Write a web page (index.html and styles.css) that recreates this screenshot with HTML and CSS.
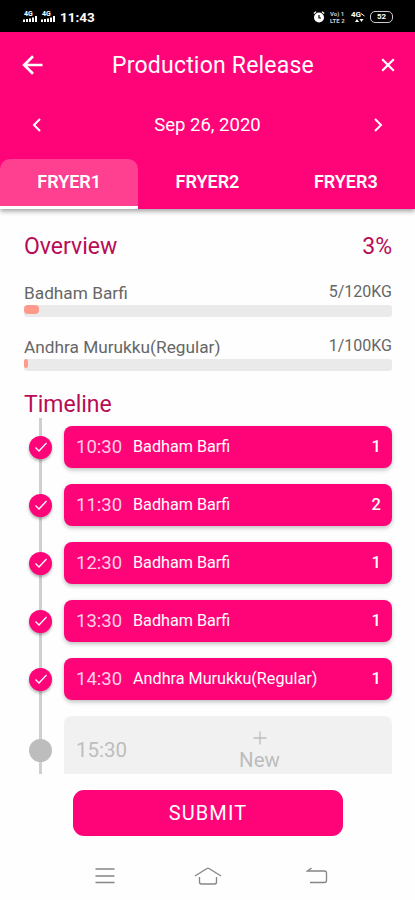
FILE: index.html
```html
<!DOCTYPE html>
<html lang="en">
<head>
    <meta charset="utf-8">
    <title>Production Release</title>
    <link rel="stylesheet" href="styles.css">
</head>
<body>
    <div class="status-bar">
        <div class="status-left">
            <svg class="signal" width="14" height="13" viewBox="0 0 14 13" fill="#fff">
                <text x="1" y="6">4G</text>
                <path d="M0 9.500h2v2.500H0zM3 9h2v3H3zM6 8.500h2v3.500H6zM9 7.500h2V12H9zM12 6h2v6h-2z"/>
            </svg>
            <svg class="signal" width="14" height="13" viewBox="0 0 14 13" fill="#fff">
                <text x="1" y="6">4G</text>
                <path d="M0 9.500h2v2.500H0zM3 9h2v3H3zM6 8.500h2v3.500H6zM9 7.500h2V12H9zM12 6h2v6h-2z"/>
            </svg>
            <span class="clock">11:43</span>
        </div>
        <div class="status-right">
            <svg width="12" height="12" viewBox="0 0 12 12">
                <circle cx="6" cy="6.500" r="5" fill="#fff"/>
                <path d="M.8 2.500L3 .8M11.200 2.500L9 .8" stroke="#fff" stroke-width="1.300"/>
                <path d="M6 4v3h2" fill="none" stroke="#000" stroke-width="1.200"/>
            </svg>
            <div class="volte">
                <span>Vo) 1</span>
                <span>LTE 2</span>
            </div>
            <svg class="tiny" width="14" height="13" viewBox="0 0 14 13" fill="#fff">
                <text x="0" y="7">4G</text>
                <path d="M4 12l2-3 2 3zM8.500 9h4l-2 3z"/>
                <path d="M10 3.500l3.500 2.500" stroke="#fff"/>
            </svg>
            <div class="battery">52</div>
        </div>
    </div>

    <div class="header">
        <div class="title-row">
            <svg class="back" width="22" height="20" viewBox="0 0 22 20" fill="none" stroke="#fff" stroke-width="2.700">
                <path d="M20.500 10H2.500M11 1.200L2.200 10l8.800 8.800"/>
            </svg>
            <h1>Production Release</h1>
            <svg class="close" width="14" height="14" viewBox="0 0 14 14" stroke="#fff" stroke-width="2.200">
                <path d="M1.200 1.200l11.600 11.600M12.800 1.200L1.200 12.800"/>
            </svg>
        </div>
        <div class="date-row">
            <svg width="10" height="14" viewBox="0 0 10 14" fill="none" stroke="#fff" stroke-width="2">
                <path d="M8 1L2 7l6 6"/>
            </svg>
            <span class="date">Sep 26, 2020</span>
            <svg width="10" height="14" viewBox="0 0 10 14" fill="none" stroke="#fff" stroke-width="2">
                <path d="M2 1l6 6-6 6"/>
            </svg>
        </div>
        <div class="tabs">
            <div class="tab active">FRYER1</div>
            <div class="tab">FRYER2</div>
            <div class="tab">FRYER3</div>
        </div>
    </div>

    <div class="content">
        <div class="section-title">
            <h2>Overview</h2>
            <span class="percent">3%</span>
        </div>
        <div class="product">
            <div class="product-row">
                <span class="product-name">Badham Barfi</span>
                <span class="amount">5/120KG</span>
            </div>
            <div class="bar"><div class="bar-fill" style="width: 4.2%"></div></div>
        </div>
        <div class="product">
            <div class="product-row">
                <span class="product-name">Andhra Murukku(Regular)</span>
                <span class="amount">1/100KG</span>
            </div>
            <div class="bar"><div class="bar-fill" style="width: 1%"></div></div>
        </div>

        <h2 class="timeline-title">Timeline</h2>
        <div class="timeline">
            <div class="slot">
                <div class="rail"><div class="dot"><svg width="14" height="12" viewBox="0 0 14 12"><path d="M1.500 6.500l3.500 3.500 7.500-8"/></svg></div></div>
                <div class="card"><span class="time">10:30</span><span class="item">Badham Barfi</span><span class="count">1</span></div>
            </div>
            <div class="slot">
                <div class="rail"><div class="dot"><svg width="14" height="12" viewBox="0 0 14 12"><path d="M1.500 6.500l3.500 3.500 7.500-8"/></svg></div></div>
                <div class="card"><span class="time">11:30</span><span class="item">Badham Barfi</span><span class="count">2</span></div>
            </div>
            <div class="slot">
                <div class="rail"><div class="dot"><svg width="14" height="12" viewBox="0 0 14 12"><path d="M1.500 6.500l3.500 3.500 7.500-8"/></svg></div></div>
                <div class="card"><span class="time">12:30</span><span class="item">Badham Barfi</span><span class="count">1</span></div>
            </div>
            <div class="slot">
                <div class="rail"><div class="dot"><svg width="14" height="12" viewBox="0 0 14 12"><path d="M1.500 6.500l3.500 3.500 7.500-8"/></svg></div></div>
                <div class="card"><span class="time">13:30</span><span class="item">Badham Barfi</span><span class="count">1</span></div>
            </div>
            <div class="slot">
                <div class="rail"><div class="dot"><svg width="14" height="12" viewBox="0 0 14 12"><path d="M1.500 6.500l3.500 3.500 7.500-8"/></svg></div></div>
                <div class="card"><span class="time">14:30</span><span class="item">Andhra Murukku(Regular)</span><span class="count">1</span></div>
            </div>
            <div class="slot empty">
                <div class="rail"><div class="dot"></div></div>
                <div class="card">
                    <span class="time">15:30</span>
                    <div class="new">
                        <svg width="14" height="14" viewBox="0 0 14 14" stroke="#bdbdbd" stroke-width="1.300"><path d="M7 .5v13M.5 7h13"/></svg>
                        <span>New</span>
                    </div>
                </div>
            </div>
        </div>
    </div>

    <button type="button" class="submit-btn">SUBMIT</button>

    <div class="nav-bar">
        <svg width="20" height="18" viewBox="0 0 20 18" stroke="#858585" stroke-width="1.300">
            <path d="M.5 2h19M.5 9h19M.5 15.500h19"/>
        </svg>
        <svg width="28" height="20" viewBox="0 0 28 20" fill="none" stroke="#858585" stroke-width="1.300">
            <path d="M1 9L13 1.500q1-.6 2 0L27 9M5.500 10v5q0 2 2 2h13q2 0 2-2v-5"/>
        </svg>
        <svg width="22" height="18" viewBox="0 0 22 18" fill="none" stroke="#858585" stroke-width="1.300">
            <path d="M5.500 1L1.500 4h17q2 0 2 2v7.500q0 2-2 2H4"/>
        </svg>
    </div>
</body>
</html>
```
FILE: styles.css
```css
* {
    box-sizing: border-box;
}
body {
    margin: 0;
    width: 415px;
    height: 900px;
    overflow: hidden;
    background: #fefefe;
    font-family: Roboto, sans-serif;
    display: flex;
    flex-direction: column;
}
h1, h2 {
    margin: 0;
    font-weight: 400;
}
svg {
    display: block;
    flex: none;
}

/* phone status bar */
.status-bar {
    height: 32px;
    flex: none;
    padding: 1px 22px 0 23px;
    background: #000;
    color: #fff;
    display: flex;
    justify-content: space-between;
    align-items: center;
}
.status-left, .status-right {
    display: flex;
    align-items: center;
}
.status-left {
    gap: 4px;
}
.status-right {
    gap: 5px;
}
.signal text {
    font-size: 7px;
    font-weight: 700;
}
.tiny text {
    font-size: 8px;
    font-weight: 700;
}
.volte {
    width: 16px;
    display: flex;
    flex-direction: column;
    color: #ccc;
    font-size: 6px;
    line-height: 7px;
    font-weight: 700;
    white-space: nowrap;
}
.clock {
    margin-left: 1px;
    font-size: 13.5px;
    font-weight: 700;
}
.battery {
    width: 23px;
    height: 12px;
    border: 1.500px solid #ccc;
    border-radius: 5px;
    font-size: 8px;
    line-height: 10px;
    font-weight: 700;
    text-align: center;
}

.header {
    height: 177px;
    flex: none;
    background: #ff0478;
    color: #fff;
    box-shadow: 0 2px 5px rgba(0,0,0,0.4);
}
.title-row {
    height: 66px;
    padding: 0 20px 0 22px;
    display: flex;
    align-items: center;
    justify-content: space-between;
}
h1 {
    font-size: 23px;
    letter-spacing: 0.2px;
    margin-left: 1px;
}
.date-row {
    height: 61px;
    padding: 0 32px;
    padding-bottom: 7px;
    display: flex;
    align-items: center;
    justify-content: space-between;
}
.date {
    font-size: 18.5px;
}
.tabs {
    height: 50px;
    display: flex;
}
.tab {
    flex: 1;
    padding-top: 12px;
    font-size: 18px;
    line-height: 21px;
    font-weight: 600;
    text-align: center;
}
.tab.active {
    background: #ff4091;
    border-bottom: 3px solid #fff;
    border-radius: 10px 10px 0 0;
}

.content {
    height: 565px;
    flex: none;
    padding: 23px 23px 0 24px;
}
.section-title {
    height: 28px;
    display: flex;
    justify-content: space-between;
}
h2, .percent {
    height: 28px;
    color: #b80c55;
    font-size: 23px;
    line-height: 30px;
}
.product {
    height: 54px;
    padding-top: 22px;
}
.product-row {
    height: 22px;
    display: flex;
    justify-content: space-between;
    color: #666;
    font-size: 17.25px;
    line-height: 22px;
}
.amount {
    font-size: 16px;
    line-height: 20px;
}
.bar {
    height: 12px;
    margin-top: 1px;
    background: #eaeaea;
    border-radius: 3px;
}
.bar-fill {
    height: 9px;
    background: #ff9a8d;
    border-radius: 4px;
}
.timeline-title {
    margin-top: 22px;
}

.timeline {
    padding-left: 5px;
    height: 356px;
}
.slot {
    display: flex;
    height: 58px;
}
.rail {
    width: 23px;
    margin-right: 12px;
    display: flex;
    justify-content: center;
    align-items: center;
    background: linear-gradient(#cfcfcf, #cfcfcf) center / 3px 100% no-repeat;
}
.dot {
    width: 23px;
    height: 23px;
    border-radius: 50%;
    background: #ff0478;
    box-shadow: 0 2px 3px rgba(0,0,0,0.3);
    display: flex;
    align-items: center;
    justify-content: center;
}
.dot path {
    fill: none;
    stroke: #fff;
    stroke-width: 1.300;
}
.card {
    flex: 1;
    height: 42px;
    margin-top: 8px;
    padding: 0 11px 1px 12px;
    display: flex;
    align-items: center;
    background: #ff0478;
    color: #fff;
    border-radius: 8px;
    box-shadow: 0 2px 4px rgba(0,0,0,0.25);
}
.time {
    width: 57px;
    color: #ffd0e4;
    font-size: 18.5px;
}
.item {
    flex: 1;
    font-size: 16.2px;
}
.count {
    font-size: 16.5px;
    font-weight: 500;
}
.slot.empty {
    height: 66px;
}
.empty .dot {
    margin-top: 18px;
    background: #bdbdbd;
    box-shadow: none;
}
.empty .card {
    height: 58px;
    padding-top: 10px;
    background: #f1f1f1;
    color: #bdbdbd;
    border-radius: 8px 8px 0 0;
    box-shadow: none;
}
.empty .time {
    color: #bdbdbd;
    font-size: 20.5px;
}
.new {
    flex: 1;
    padding-top: 6px;
    padding-left: 5px;
    display: flex;
    flex-direction: column;
    align-items: center;
    font-size: 20.5px;
    line-height: 30px;
}

.submit-btn {
    width: 270px;
    height: 46px;
    flex: none;
    margin: 16px 0 0 73px;
    padding: 0 0 1px;
    border: none;
    border-radius: 11px;
    background: #ff0478;
    color: #fff;
    font-family: inherit;
    font-size: 20px;
    letter-spacing: 1.100px;
}
.nav-bar {
    padding: 31px 87px 0 95px;
    display: flex;
    justify-content: space-between;
}
.nav-bar svg:nth-child(2) {
    margin-right: 5px;
}
```
